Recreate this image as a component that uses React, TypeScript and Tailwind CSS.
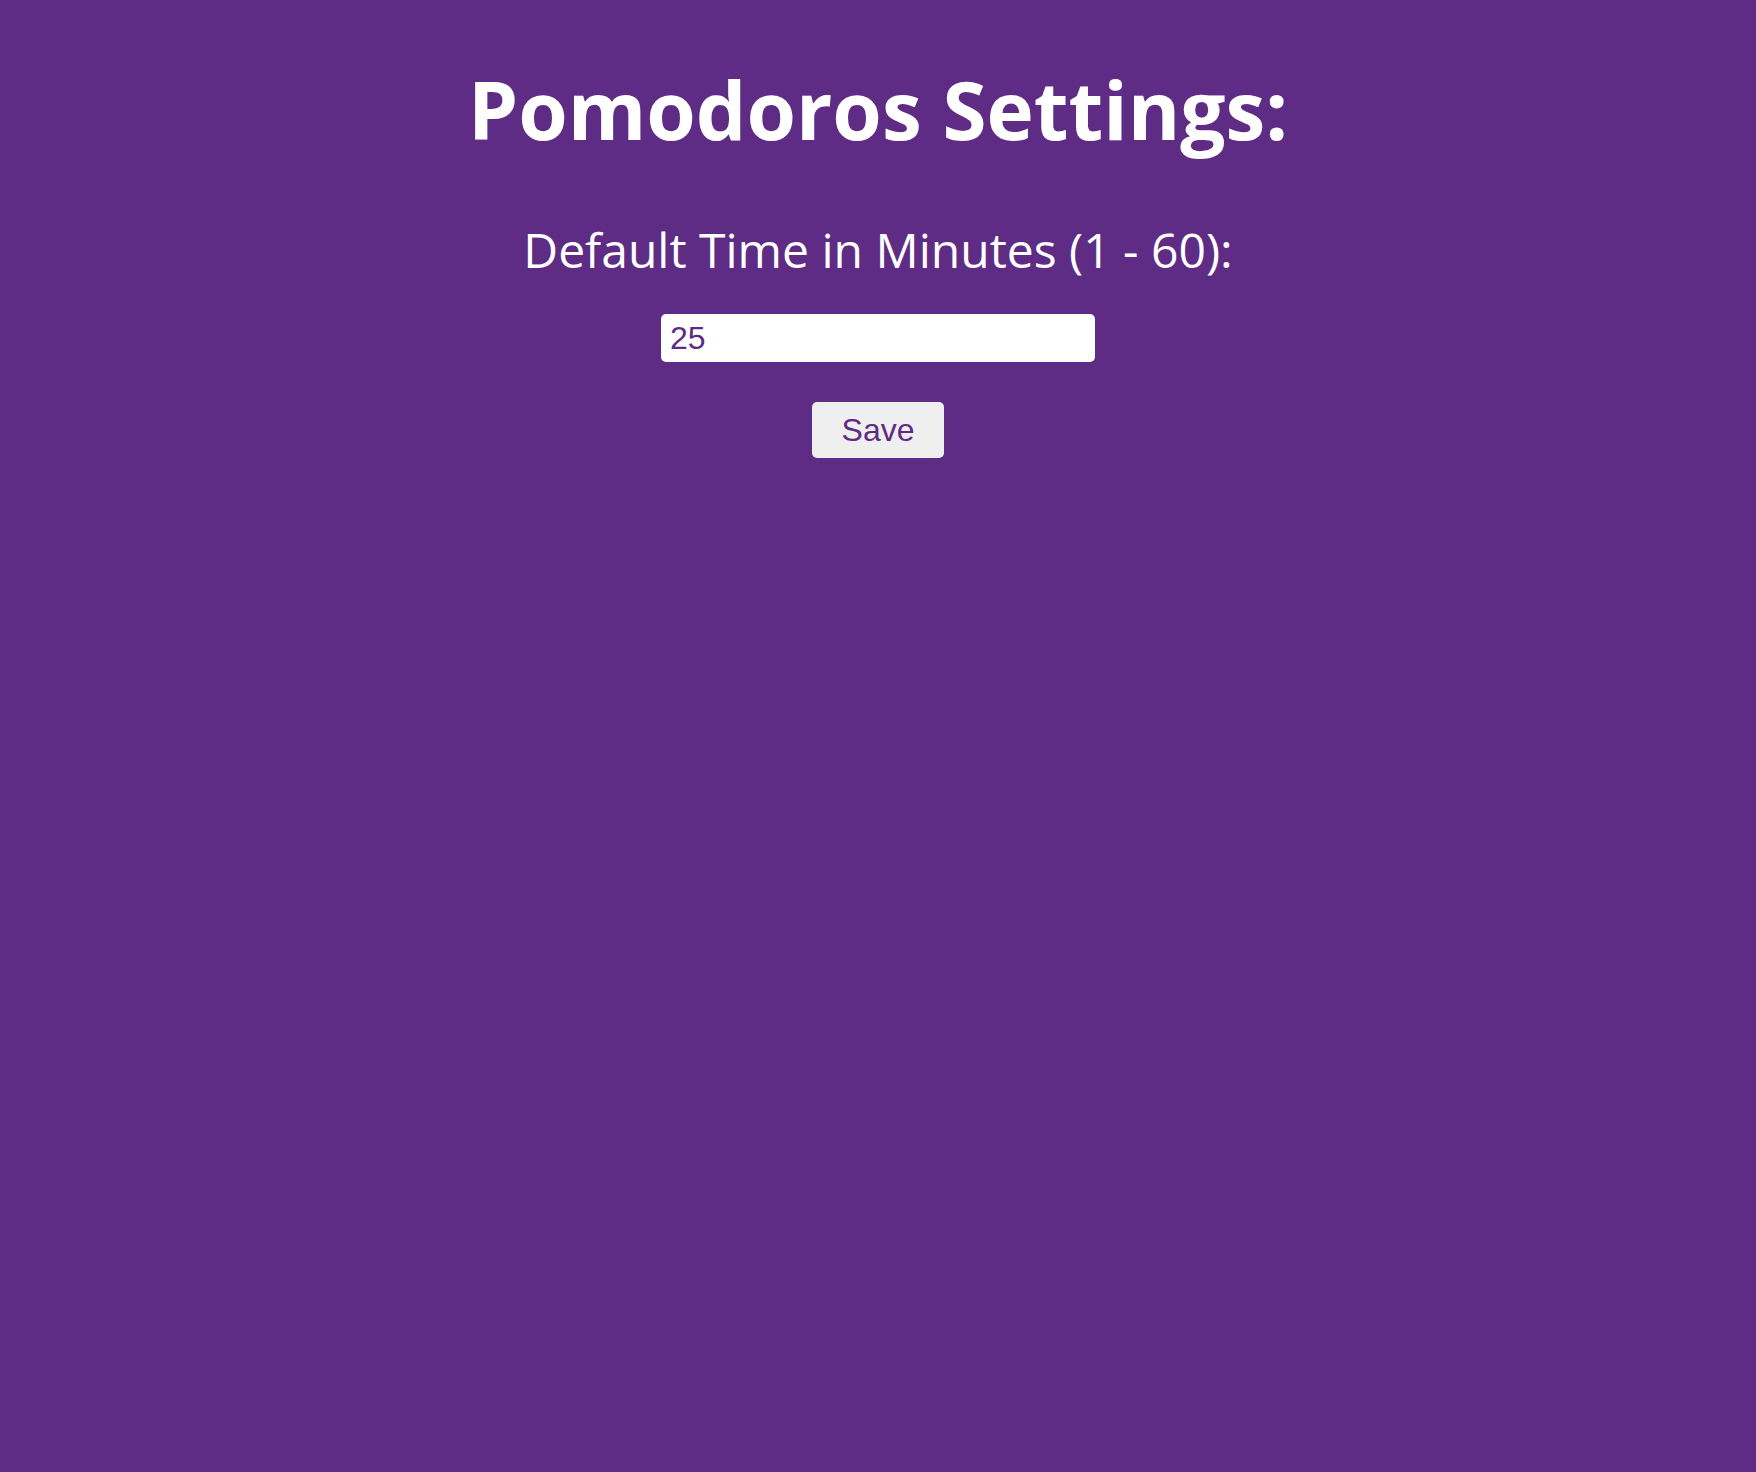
import { useState } from 'react';

// Pomodoros settings page
export default function App() {
  const [minutes, setMinutes] = useState('25');

  return (
    <div className="min-h-[1472px] w-full bg-[#5e2c85] text-white flex flex-col items-center font-['Open_Sans',sans-serif]">
      <h1 className="mt-[49px] text-[80px] font-bold leading-normal">Pomodoros Settings:</h1>

      <label htmlFor="minutes" className="mt-[45px] text-[48px] leading-normal">
        Default Time in Minutes (1 - 60):
      </label>

      <input
        id="minutes"
        type="text"
        value={minutes}
        onChange={(e) => setMinutes(e.target.value)}
        className="mt-[28px] w-[434px] h-[48px] rounded-[5px] bg-white px-[9px] text-[32px] text-[#5e2c85] font-['Liberation_Sans',Arial,sans-serif] outline-none"
      />

      <button
        type="button"
        className="mt-[40px] w-[132px] h-[56px] rounded-[5px] bg-[#efefef] text-[32px] text-[#5e2c85] font-['Liberation_Sans',Arial,sans-serif] leading-normal"
      >
        Save
      </button>
    </div>
  );
}
